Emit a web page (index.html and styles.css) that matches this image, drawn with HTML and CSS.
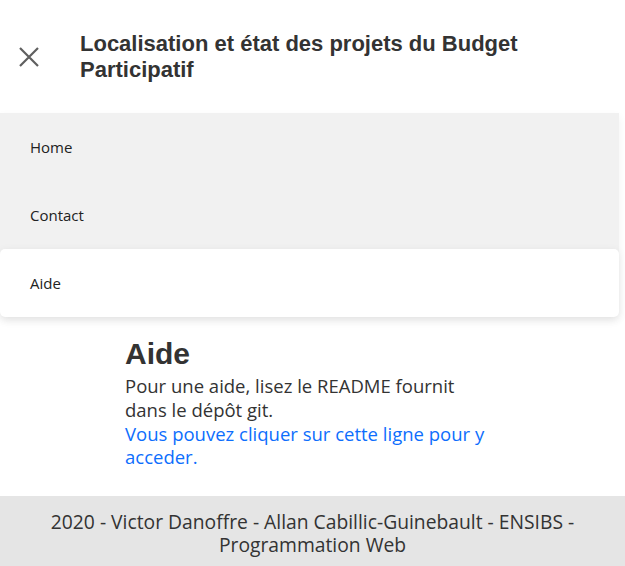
FILE: index.html
```html
<!DOCTYPE html>
<html lang="fr">
<head>
<meta charset="utf-8">
<title>Aide</title>
<link rel="stylesheet" href="styles.css">
</head>
<body>
<header class="topbar">
  <button class="close" aria-label="Fermer">
    <svg width="20" height="20" viewBox="0 0 20 20"><path d="M1 1 L19 19 M19 1 L1 19" stroke="#5f5f5f" stroke-width="2.2" fill="none"/></svg>
  </button>
  <h2 class="title">Localisation et état des projets du Budget Participatif</h2>
</header>
<nav class="menu">
  <a class="item" href="#">Home</a>
  <a class="item" href="#">Contact</a>
  <a class="item active" href="#">Aide</a>
</nav>
<main class="content">
  <h1 class="heading">Aide</h1>
  <p class="text">Pour une aide, lisez le README fournit dans le dépôt git.</p>
  <a class="link" href="#">Vous pouvez cliquer sur cette ligne pour y acceder.</a>
</main>
<footer class="footer">2020 - Victor Danoffre - Allan Cabillic-Guinebault - ENSIBS - Programmation Web</footer>
</body>
</html>
```
FILE: styles.css
```css
* { box-sizing: border-box; }
html, body { margin: 0; padding: 0; }
body {
  font-family: "Open Sans", "Noto Sans", sans-serif;
  color: #333;
  background: #fff;
  width: 625px;
  height: 566px;
  display: flex;
  flex-direction: column;
  overflow: hidden;
}
.topbar {
  height: 113px;
  display: flex;
  align-items: center;
  padding-left: 19px;
}
.close {
  border: 0;
  background: none;
  padding: 0;
  width: 20px;
  height: 20px;
  margin-right: 41px;
  display: flex;
}
.title {
  margin: 0;
  font-family: "Liberation Sans", Arial, sans-serif;
  font-weight: bold;
  font-size: 22px;
  line-height: 26px;
  color: #333;
  width: 480px;
}
.menu {
  width: 619px;
  background: #f1f1f1;
  display: flex;
  flex-direction: column;
  border-radius: 0 0 5px 5px;
  box-shadow: 0 4px 10px rgba(0,0,0,0.06);
}
.item {
  height: 68px;
  display: flex;
  align-items: center;
  padding-left: 30px;
  font-size: 15px;
  color: #222;
  text-decoration: none;
}
.item.active {
  background: #fff;
  border-radius: 5px;
  box-shadow: 0 2px 8px rgba(0,0,0,0.08);
}
.content {
  flex: 1;
  padding: 17px 125px 0 125px;
}
.heading {
  margin: 0;
  font-family: "Liberation Sans", Arial, sans-serif;
  font-size: 30px;
  line-height: 40px;
  color: #333;
}
.text {
  margin: 0;
  font-size: 18.5px;
  line-height: 24px;
}
.link {
  display: block;
  font-size: 18.5px;
  line-height: 23px;
  color: #0d6efd;
  text-decoration: none;
}
.footer {
  height: 70px;
  background: #e5e5e5;
  text-align: center;
  font-size: 19.3px;
  line-height: 23px;
  padding: 14px 30px 0;
  color: #333;
}
```
